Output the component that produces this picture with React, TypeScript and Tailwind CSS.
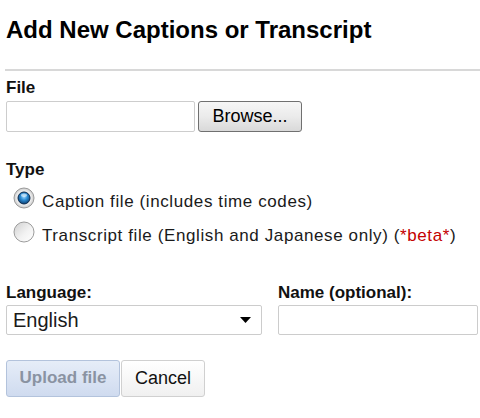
const font = "font-['Liberation_Sans',Arial,sans-serif]";

const RadioOn = () => (
    <svg width="22" height="22" viewBox="0 0 22 22" className="-mt-1 shrink-0">
        <defs>
            <radialGradient id="ringOn" cx="50%" cy="50%" r="50%">
                <stop offset="0%" stopColor="#ffffff" />
                <stop offset="70%" stopColor="#eeeeee" />
                <stop offset="100%" stopColor="#c9c9c9" />
            </radialGradient>
            <radialGradient id="dotOn" cx="50%" cy="40%" r="60%">
                <stop offset="0%" stopColor="#9ed8ff" />
                <stop offset="45%" stopColor="#2f8fd6" />
                <stop offset="100%" stopColor="#0b3f72" />
            </radialGradient>
        </defs>
        <circle cx="11" cy="11" r="10" fill="url(#ringOn)" stroke="#9a9a9a" />
        <circle cx="11" cy="11" r="6" fill="url(#dotOn)" stroke="#0b2a4d" />
        <ellipse cx="11" cy="8.3" rx="3" ry="1.7" fill="#ffffff" opacity="0.55" />
    </svg>
);

const RadioOff = () => (
    <svg width="22" height="22" viewBox="0 0 22 22" className="-mt-1 shrink-0">
        <defs>
            <linearGradient id="ringOff" x1="0" y1="0" x2="1" y2="1">
                <stop offset="0%" stopColor="#cfcfcf" />
                <stop offset="55%" stopColor="#f2f2f2" />
                <stop offset="100%" stopColor="#ffffff" />
            </linearGradient>
        </defs>
        <circle cx="11" cy="11" r="10" fill="url(#ringOff)" stroke="#9c9c9c" />
    </svg>
);

const Label = ({ children }: { children: React.ReactNode }) => (
    <div className="text-[17px] leading-[20px] font-bold text-[#111]">{children}</div>
);

export default function App() {
    return (
        <div className={`${font} bg-white w-[480px] h-[418px] pl-[6px] pt-[16px] overflow-hidden`}>
            <h1 className="text-[24px] leading-[28px] font-bold text-black">
                Add New Captions or Transcript
            </h1>

            <div className="mt-[25px] -ml-px h-[2px] bg-[#d8d8d8]" />

            {/* File picker */}
            <div className="mt-[7px]">
                <Label>File</Label>
                <div className="mt-[3px] flex items-center gap-[3px]">
                    <div className="w-[189px] h-[31px] border border-[#cdcdcd] rounded-[2px] bg-white" />
                    <button className="w-[104px] h-[31px] border border-[#707070] rounded-[3px] bg-linear-to-b from-[#f6f6f6] via-[#ebebeb] to-[#d9d9d9] text-[18px] text-black">
                        Browse...
                    </button>
                </div>
            </div>

            {/* Type */}
            <div className="mt-[28px]">
                <Label>Type</Label>
                <div className="mt-[11px] flex flex-col gap-[11.5px] text-[17px] leading-[22px] tracking-[0.6px] text-[#1a1a1a]">
                    <div className="flex items-start gap-[7px] pl-[7px]">
                        <RadioOn />
                        <span>Caption file (includes time codes)</span>
                    </div>
                    <div className="flex items-start gap-[7px] pl-[7px]">
                        <RadioOff />
                        <span>
                            Transcript file (English and Japanese only) (
                            <span className="text-[#c40000]">*beta*</span>)
                        </span>
                    </div>
                </div>
            </div>

            {/* Language + name */}
            <div className="mt-[36px] flex gap-4">
                <div className="w-[256px]">
                    <Label>Language:</Label>
                    <div className="mt-[2px] h-[30px] border border-[#cccccc] rounded-[2px] flex items-center justify-between pl-[6px] pr-[10px] text-[20px] text-[#1a1a1a]">
                        <span>English</span>
                        <svg width="11" height="6" viewBox="0 0 11 6">
                            <path d="M0 0 H11 L5.5 6 Z" fill="#000" />
                        </svg>
                    </div>
                </div>
                <div className="w-[200px]">
                    <Label>Name (optional):</Label>
                    <div className="mt-[2px] h-[30px] border border-[#cccccc] rounded-[2px] bg-white" />
                </div>
            </div>

            {/* Actions */}
            <div className="mt-[25px] flex gap-[1px]">
                <button
                    disabled
                    className="w-[114px] h-[37px] border border-[#b3c3dc] rounded-[3px] bg-linear-to-b from-[#e6edf8] to-[#cfdbef] text-[17px] font-bold text-[#8a93a2]"
                >
                    Upload file
                </button>
                <button className="w-[84px] h-[37px] border border-[#d0d0d0] rounded-[3px] bg-linear-to-b from-white to-[#f0f0f0] text-[18px] text-[#111]">
                    Cancel
                </button>
            </div>
        </div>
    );
}
